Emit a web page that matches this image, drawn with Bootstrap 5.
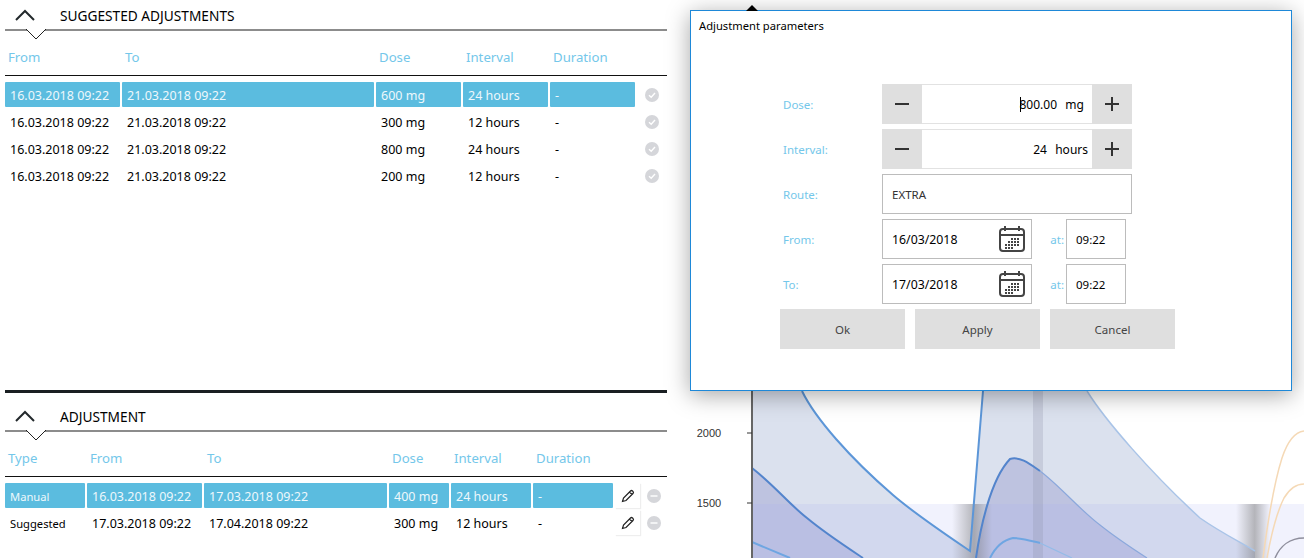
<!DOCTYPE html>
<html lang="en">
<head>
<meta charset="UTF-8">
<title>Adjustments</title>
<link href="https://cdn.jsdelivr.net/npm/bootstrap@5.3.3/dist/css/bootstrap.min.css" rel="stylesheet">
<style>
html, body { height: 100%; }
body { font-family: "Noto Sans", "Liberation Sans", sans-serif; font-size: 11.5px; color: #000; background: #fff; overflow: hidden; position: relative; }
.stage { height: 558px; }
.left-pane { width: 662px; margin-left: 5px; flex: none; }
.sect-top { height: 385px; }
.sect-sep { height: 3px; background: #1a1f22; margin-bottom: 5px; margin-top: 5px; }
.sect-head { height: 31px; border-bottom: 2px solid #8c8c8c; position: relative; padding-left: 10px; gap: 25px; font-size: 13.7px; }
.sect-head > span { padding-top: 3px; }
.sect-head2 { height: 34px; padding-top: 3px; }
.sect-notch { position: absolute; left: 20px; top: 28px; }
.sect-notch2 { top: 31px; }
.col-heads, .adj-row { display: grid; column-gap: 2px; }
.cols-a { grid-template-columns: 115px 252px 85px 85px 85px 30px; }
.cols-b { grid-template-columns: 80px 115px 183px 60px 80px 80px 25px 24px; }
.col-heads { height: 45px; border-bottom: 1px solid #111; margin-bottom: 6px; align-items: center; color: #74c7ea; font-size: 13.2px; padding-top: 10px; }
.col-heads > span { padding-left: 3px; }
.adj-row { height: 27px; font-size: 12.5px; }
.adj-row > span { height: 25px; padding-left: 5px; line-height: 28px; white-space: nowrap; }
.adj-row > span.cell-type { font-size: 11.2px; }
.adj-row.active > span.cell { background: #5bbcdf; color: #eef8fc; border-radius: 1px; }
.adj-row > span.ico { padding: 0; display: flex; align-items: center; justify-content: center; }
.ico-edit { background: #fff; box-shadow: 1px 1px 1px #eee; }
.chart-pane { flex: 1 1 auto; min-width: 0; }
.chart-pane svg { display: block; }
.adj-modal { position: absolute; left: 690px; top: 10px; width: 602px; height: 381px; background: #fff; border: 1px solid #1e88d8; box-shadow: 0 4px 22px rgba(0,0,0,.35); }
.adj-modal-tip { position: absolute; left: 55px; top: -6px; width: 0; height: 0; border-left: 6px solid transparent; border-right: 6px solid transparent; border-bottom: 6px solid #000; }
.adj-modal-title { padding: 8px 8px 0; height: 73px; line-height: 14px; font-size: 11.2px; }
.form-rows { margin-left: 92px; gap: 5px; width: 349px; }
.form-line { height: 40px; }
.form-label-x { width: 99px; color: #74c7ea; flex: none; padding-top: 2px; }
.at-label { width: 34px; color: #74c7ea; text-align: right; padding-right: 2px; padding-top: 2px; }
.step-btn { width: 40px; height: 40px; background: #dfdfdf; border: 0; padding: 0; display: flex; align-items: center; justify-content: center; }
.step-val { width: 170px; height: 40px; border-top: 1px solid #e2e2e2; border-bottom: 1px solid #e2e2e2; text-align: right; line-height: 40px; padding-right: 4px; white-space: pre; font-size: 12px; word-spacing: 1px; }
.text-box { border: 1px solid #bcbcbc; height: 40px; line-height: 40px; padding-left: 9px; }
.box-route { width: 250px; color: #333; }
.box-date { width: 150px; position: relative; font-size: 12.3px; }
.box-date svg { position: absolute; right: 6px; top: 6px; }
.box-time { width: 60px; }
.caret-mark { display: inline-block; width: 1px; height: 15px; background: #000; margin-right: -1px; vertical-align: -3px; }
.btn-row { margin-left: 89px; margin-top: 5px; gap: 10px; }
.btn-adj { width: 125px; height: 40px; border: 0; border-radius: 0; background: #dfdfdf; color: #444; font-size: 11.5px; padding: 2px 0 0; }
</style>
</head>
<body>
<div class="stage d-flex">
  <div class="left-pane">
    <div class="sect-top">
      <div class="sect-head d-flex align-items-center">
        <svg width="20" height="12" viewBox="0 0 20 12"><path d="M1 11 L10 2 L19 11" fill="none" stroke="#23292c" stroke-width="2"/></svg>
        <span>SUGGESTED ADJUSTMENTS</span>
        <svg class="sect-notch" width="22" height="12" viewBox="0 0 22 12"><path d="M0 0 L11 11 L22 0 Z" fill="#fff"/><path d="M1 1 L11 11 L21 1" fill="none" stroke="#222" stroke-width="1"/></svg>
      </div>
      <div class="col-heads cols-a"><span>From</span><span>To</span><span>Dose</span><span>Interval</span><span>Duration</span><span></span></div>
      <div class="adj-row cols-a active"><span class="cell">16.03.2018 09:22</span><span class="cell">21.03.2018 09:22</span><span class="cell">600 mg</span><span class="cell">24 hours</span><span class="cell">-</span><span class="ico"><svg width="14" height="14" viewBox="0 0 14 14"><circle cx="7" cy="7" r="7" fill="#d5d6da"/><path d="M4 7.2 L6.2 9.2 L10 5" fill="none" stroke="#fff" stroke-width="1.4"/></svg></span></div>
      <div class="adj-row cols-a"><span class="cell">16.03.2018 09:22</span><span class="cell">21.03.2018 09:22</span><span class="cell">300 mg</span><span class="cell">12 hours</span><span class="cell">-</span><span class="ico"><svg width="14" height="14" viewBox="0 0 14 14"><circle cx="7" cy="7" r="7" fill="#d5d6da"/><path d="M4 7.2 L6.2 9.2 L10 5" fill="none" stroke="#fff" stroke-width="1.4"/></svg></span></div>
      <div class="adj-row cols-a"><span class="cell">16.03.2018 09:22</span><span class="cell">21.03.2018 09:22</span><span class="cell">800 mg</span><span class="cell">24 hours</span><span class="cell">-</span><span class="ico"><svg width="14" height="14" viewBox="0 0 14 14"><circle cx="7" cy="7" r="7" fill="#d5d6da"/><path d="M4 7.2 L6.2 9.2 L10 5" fill="none" stroke="#fff" stroke-width="1.4"/></svg></span></div>
      <div class="adj-row cols-a"><span class="cell">16.03.2018 09:22</span><span class="cell">21.03.2018 09:22</span><span class="cell">200 mg</span><span class="cell">12 hours</span><span class="cell">-</span><span class="ico"><svg width="14" height="14" viewBox="0 0 14 14"><circle cx="7" cy="7" r="7" fill="#d5d6da"/><path d="M4 7.2 L6.2 9.2 L10 5" fill="none" stroke="#fff" stroke-width="1.4"/></svg></span></div>
    </div>
    <div class="sect-sep"></div>
    <div>
      <div class="sect-head sect-head2 d-flex align-items-center">
        <svg width="20" height="12" viewBox="0 0 20 12"><path d="M1 11 L10 2 L19 11" fill="none" stroke="#23292c" stroke-width="2"/></svg>
        <span>ADJUSTMENT</span>
        <svg class="sect-notch sect-notch2" width="22" height="12" viewBox="0 0 22 12"><path d="M0 0 L11 11 L22 0 Z" fill="#fff"/><path d="M1 1 L11 11 L21 1" fill="none" stroke="#222" stroke-width="1"/></svg>
      </div>
      <div class="col-heads cols-b"><span>Type</span><span>From</span><span>To</span><span>Dose</span><span>Interval</span><span>Duration</span><span></span><span></span></div>
      <div class="adj-row cols-b active"><span class="cell cell-type">Manual</span><span class="cell">16.03.2018 09:22</span><span class="cell">17.03.2018 09:22</span><span class="cell">400 mg</span><span class="cell">24 hours</span><span class="cell">-</span><span class="ico ico-edit"><svg width="14" height="14" viewBox="0 0 14 14"><path d="M1.5 12.5 L2.5 9 L9.5 2 Q10.5 1 11.5 2 L12 2.5 Q13 3.5 12 4.5 L5 11.5 Z M8.5 3 L11 5.5" fill="none" stroke="#222" stroke-width="1.2"/></svg></span><span class="ico"><svg width="14" height="14" viewBox="0 0 14 14"><circle cx="7" cy="7" r="7" fill="#d5d6da"/><path d="M3.5 7 H10.5" stroke="#fff" stroke-width="1.4"/></svg></span></div>
      <div class="adj-row cols-b"><span class="cell cell-type">Suggested</span><span class="cell">17.03.2018 09:22</span><span class="cell">17.04.2018 09:22</span><span class="cell">300 mg</span><span class="cell">12 hours</span><span class="cell">-</span><span class="ico ico-edit"><svg width="14" height="14" viewBox="0 0 14 14"><path d="M1.5 12.5 L2.5 9 L9.5 2 Q10.5 1 11.5 2 L12 2.5 Q13 3.5 12 4.5 L5 11.5 Z M8.5 3 L11 5.5" fill="none" stroke="#222" stroke-width="1.2"/></svg></span><span class="ico"><svg width="14" height="14" viewBox="0 0 14 14"><circle cx="7" cy="7" r="7" fill="#d5d6da"/><path d="M3.5 7 H10.5" stroke="#fff" stroke-width="1.4"/></svg></span></div>
    </div>
  </div>

  <div class="chart-pane ms-auto">
    <!-- viewBox uses page coordinates -->
    <svg width="637" height="558" viewBox="667 0 637 558">
      <defs>
        <linearGradient id="fadeA" x1="0" x2="1" y1="0" y2="0"><stop offset="0" stop-color="#777" stop-opacity="0"/><stop offset=".55" stop-color="#777" stop-opacity=".5"/><stop offset="1" stop-color="#777" stop-opacity="0"/></linearGradient>
      </defs>
      <path d="M752 391 H802 C815 418 850 458 893 495 C915 514 945 534 970 551 L983 391 H1087 C1105 420 1150 472 1200 518 C1220 532 1240 542 1255 551 V558 H752 Z" fill="#dbe1ee"/>
      <path d="M752 468 C775 486 790 505 807 518 C825 533 845 546 863 558 H752 Z" fill="#bec3e0"/>
      <path d="M976 558 C980 530 990 480 1010 459 C1020 456 1030 464 1040 471 C1060 486 1080 510 1100 525 C1115 537 1130 547 1147 558 Z" fill="#bec3e0"/>
      <rect x="752" y="504" width="552" height="54" fill="#a9aff0" fill-opacity=".16"/>
      <rect x="1033" y="391" width="10" height="167" fill="#8a90a8" fill-opacity=".25"/>
      <rect x="952" y="504" width="40" height="54" fill="url(#fadeA)"/>
      <rect x="1236" y="504" width="34" height="54" fill="url(#fadeA)"/>
      <g fill="none" stroke-width="2">
        <path d="M802 391 C815 418 850 458 893 495 C915 514 945 534 970 551 L983 391" stroke="#5c96d8"/>
        <path d="M1087 391 C1105 420 1150 472 1200 518 C1220 532 1240 542 1255 551" stroke="#a9c4e8" stroke-width="1.5"/>
        <path d="M752 468 C775 486 790 505 807 518 C825 533 845 546 863 558" stroke="#5384cc"/>
        <path d="M976 558 C980 530 990 480 1010 459 C1020 456 1030 464 1040 471" stroke="#5384cc"/>
        <path d="M1040 471 C1060 486 1080 510 1100 525 C1115 537 1130 547 1147 558" stroke="#8ba8dc" stroke-width="1.2"/>
        <path d="M752 542 L790 558" stroke="#6fa6e2"/>
        <path d="M990 558 C995 548 1003 540 1013 538 C1022 538 1032 541 1040 543" stroke="#6fa6e2"/>
        <path d="M1040 543 L1072 558" stroke="#93bce8" stroke-width="1.2"/>
        <path d="M1263 558 C1268 520 1275 480 1282 458 C1288 440 1295 432 1304 431" stroke="#f5d9b6" stroke-width="1.5"/>
        <path d="M1267 558 C1272 530 1278 510 1284 498 C1290 488 1297 484 1304 484" stroke="#f5d9b6" stroke-width="1.5"/>
        <path d="M1275 558 C1280 546 1290 538 1304 538" stroke="#8e8e9c" stroke-width="1.5"/>
      </g>
      <path d="M752 391 V558" stroke="#666" stroke-width="2"/>
      <path d="M747 433 H752 M747 503 H752" stroke="#333" stroke-width="1"/>
      <text x="709" y="437" font-size="11" fill="#333" text-anchor="middle" font-family="Liberation Sans, sans-serif">2000</text>
      <text x="709" y="507" font-size="11" fill="#333" text-anchor="middle" font-family="Liberation Sans, sans-serif">1500</text>
    </svg>
  </div>
</div>

<div class="adj-modal">
  <div class="adj-modal-tip"></div>
  <div class="adj-modal-title">Adjustment parameters</div>
  <div class="form-rows d-flex flex-column">
    <div class="form-line d-flex align-items-center">
      <span class="form-label-x">Dose:</span>
      <button class="step-btn" type="button"><svg width="14" height="14" viewBox="0 0 14 14"><path d="M0 7 H14" stroke="#333" stroke-width="2"/></svg></button>
      <div class="step-val"><span class="caret-mark"></span>800.00  mg </div>
      <button class="step-btn" type="button"><svg width="14" height="14" viewBox="0 0 14 14"><path d="M0 7 H14 M7 0 V14" stroke="#333" stroke-width="2"/></svg></button>
    </div>
    <div class="form-line d-flex align-items-center">
      <span class="form-label-x">Interval:</span>
      <button class="step-btn" type="button"><svg width="14" height="14" viewBox="0 0 14 14"><path d="M0 7 H14" stroke="#333" stroke-width="2"/></svg></button>
      <div class="step-val">24  hours</div>
      <button class="step-btn" type="button"><svg width="14" height="14" viewBox="0 0 14 14"><path d="M0 7 H14 M7 0 V14" stroke="#333" stroke-width="2"/></svg></button>
    </div>
    <div class="form-line d-flex align-items-center">
      <span class="form-label-x">Route:</span>
      <div class="text-box box-route">EXTRA</div>
    </div>
    <div class="form-line d-flex align-items-center">
      <span class="form-label-x">From:</span>
      <div class="text-box box-date">16/03/2018
        <svg width="26" height="26" viewBox="0 0 26 26"><rect x="1" y="3" width="24" height="22" rx="3" fill="none" stroke="#444" stroke-width="2"/><path d="M1 9 H25 M6 0 V5 M20 0 V5" stroke="#444" stroke-width="2"/><path d="M12 12h2v2h-2z M15 12h2v2h-2z M18 12h2v2h-2z M9 15h2v2h-2z M12 15h2v2h-2z M15 15h2v2h-2z M18 15h2v2h-2z M6 18h2v2h-2z M9 18h2v2h-2z M12 18h2v2h-2z M15 18h2v2h-2z M18 18h2v2h-2z M6 21h2v2h-2z M9 21h2v2h-2z M12 21h2v2h-2z" fill="#444"/></svg>
      </div>
      <span class="at-label">at:</span>
      <div class="text-box box-time">09:22</div>
    </div>
    <div class="form-line d-flex align-items-center">
      <span class="form-label-x">To:</span>
      <div class="text-box box-date">17/03/2018
        <svg width="26" height="26" viewBox="0 0 26 26"><rect x="1" y="3" width="24" height="22" rx="3" fill="none" stroke="#444" stroke-width="2"/><path d="M1 9 H25 M6 0 V5 M20 0 V5" stroke="#444" stroke-width="2"/><path d="M12 12h2v2h-2z M15 12h2v2h-2z M18 12h2v2h-2z M9 15h2v2h-2z M12 15h2v2h-2z M15 15h2v2h-2z M18 15h2v2h-2z M6 18h2v2h-2z M9 18h2v2h-2z M12 18h2v2h-2z M15 18h2v2h-2z M18 18h2v2h-2z M6 21h2v2h-2z M9 21h2v2h-2z M12 21h2v2h-2z" fill="#444"/></svg>
      </div>
      <span class="at-label">at:</span>
      <div class="text-box box-time">09:22</div>
    </div>
  </div>
  <div class="btn-row d-flex">
    <button class="btn btn-adj" type="button">Ok</button>
    <button class="btn btn-adj" type="button">Apply</button>
    <button class="btn btn-adj" type="button">Cancel</button>
  </div>
</div>
<script src="https://cdn.jsdelivr.net/npm/bootstrap@5.3.3/dist/js/bootstrap.bundle.min.js"></script>
</body>
</html>
